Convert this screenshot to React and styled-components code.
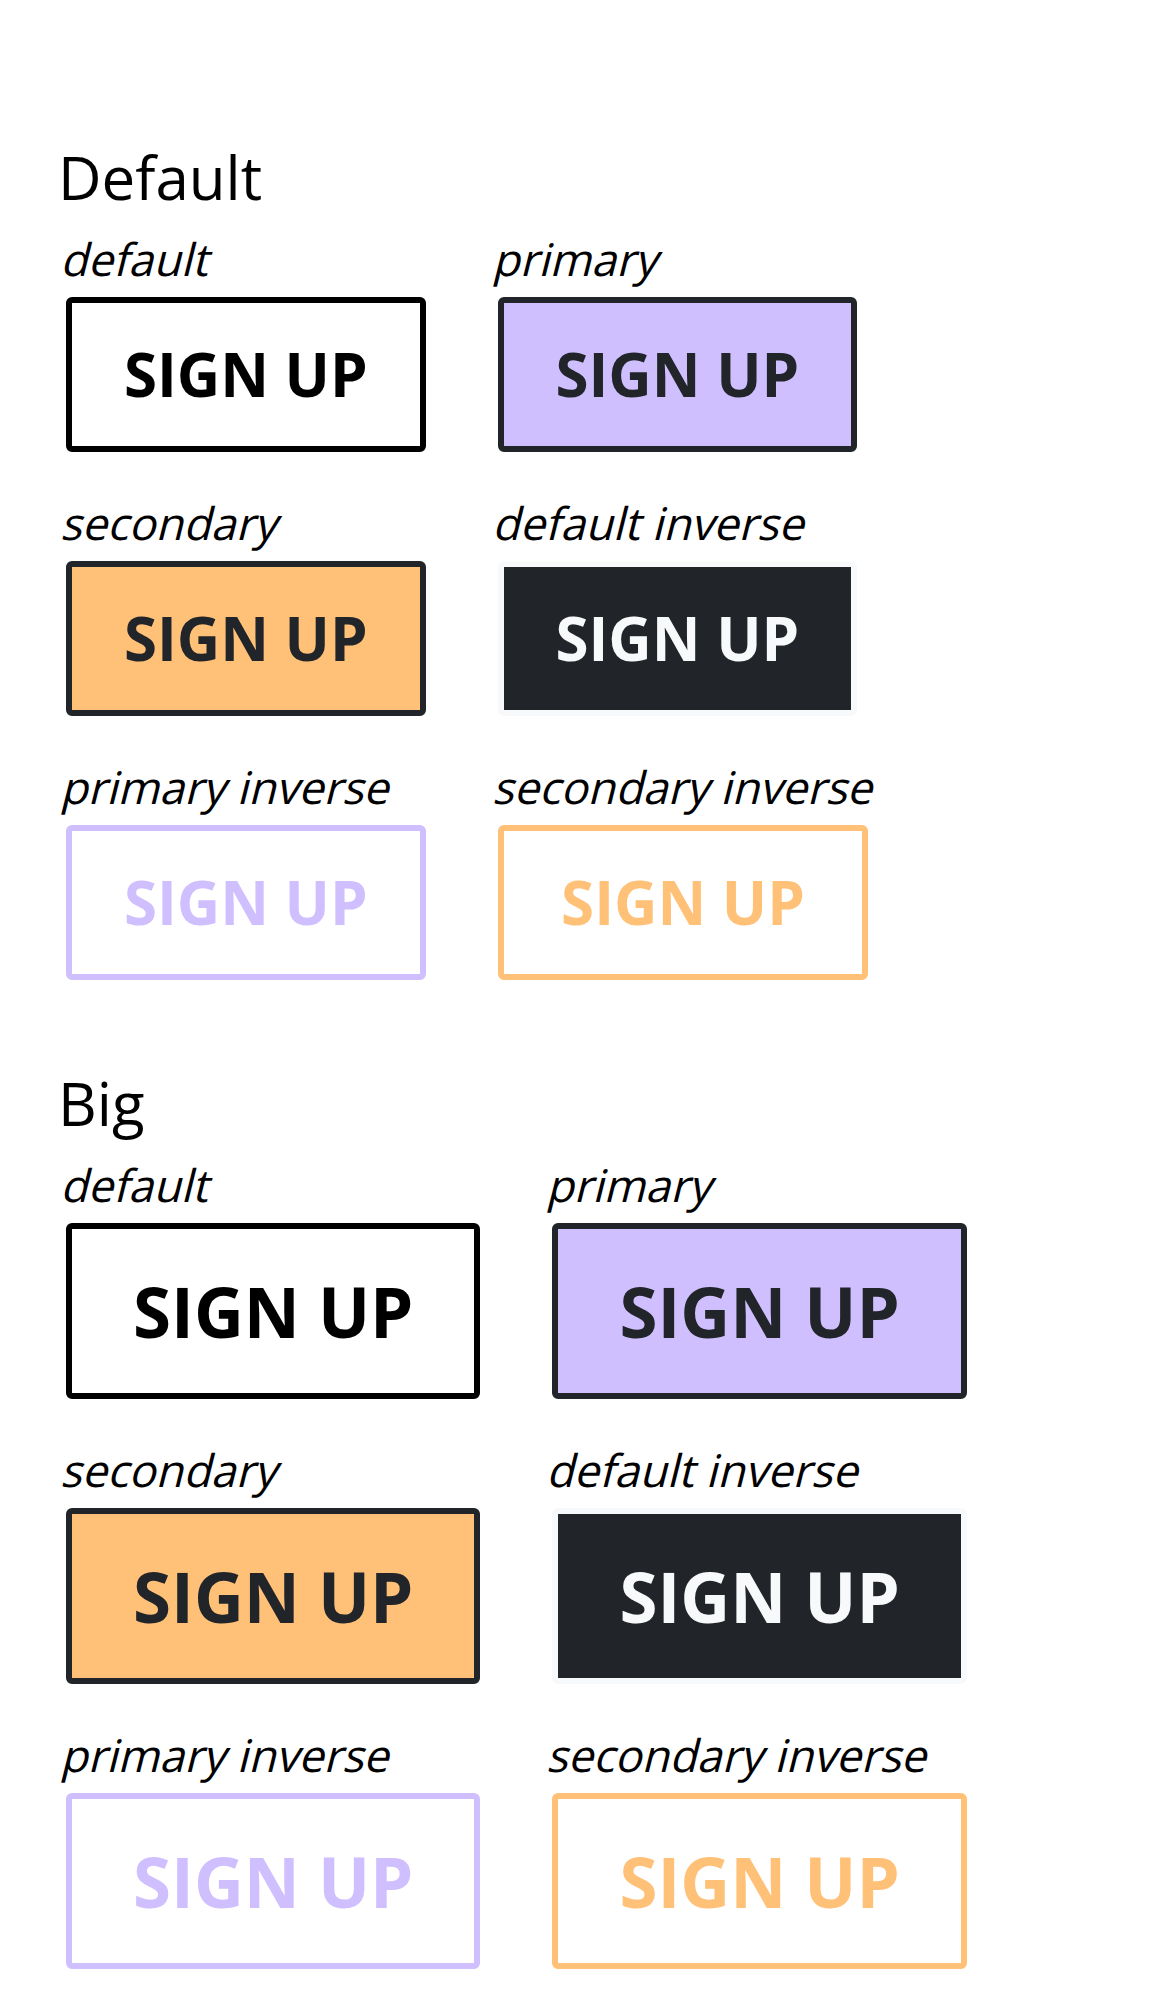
import React from "react";
import styled, { createGlobalStyle, css } from "styled-components";

const GlobalStyle = createGlobalStyle`
  html, body {
    margin: 0;
    padding: 0;
    background: #ffffff;
  }
  body {
    font-family: "Open Sans", "Noto Sans", sans-serif;
    color: #000000;
  }
`;

const Page = styled.main`
  padding: 136px 0 25px 58px;
  display: flex;
  flex-direction: column;
  gap: 82px;
`;

const Section = styled.section`
  display: flex;
  flex-direction: column;
`;

const Heading = styled.h2`
  margin: 0 0 10px 0;
  font-family: "Open Sans", sans-serif;
  font-weight: 400;
  font-size: 60px;
  line-height: normal;
  color: #000;
`;

const Grid = styled.div`
  display: grid;
  grid-template-columns: max-content max-content;
  column-gap: 72px;
  row-gap: 40px;
  justify-items: start;
  margin-left: 8px;
`;

const Item = styled.div`
  display: flex;
  flex-direction: column;
  align-items: stretch;
`;

/* The reference shows a synthesized oblique of the regular face */
const Label = styled.div`
  font-family: "Open Sans", sans-serif;
  font-style: normal;
  font-weight: 400;
  font-size: 45px;
  line-height: normal;
  color: #000;
  margin: 0 -3px 8px -6px;
  white-space: nowrap;
  transform: skewX(-14deg);
  transform-origin: 0 78.5%;
`;

const variants = {
  default: css`
    background: #ffffff;
    color: #000000;
    border-color: #000000;
  `,
  primary: css`
    background: #d0bfff;
    color: #212529;
    border-color: #212529;
  `,
  secondary: css`
    background: #ffc078;
    color: #212529;
    border-color: #212529;
  `,
  defaultInverse: css`
    background: #212529;
    color: #f8f9fa;
    border-color: #f8f9fa;
  `,
  primaryInverse: css`
    background: #ffffff;
    color: #d0bfff;
    border-color: #d0bfff;
  `,
  secondaryInverse: css`
    background: #ffffff;
    color: #ffc078;
    border-color: #ffc078;
  `,
};

const Button = styled.button`
  display: block;
  box-sizing: border-box;
  font-family: "Open Sans", sans-serif;
  font-weight: 700;
  font-size: ${(p) => (p.$big ? "69px" : "60px")};
  line-height: normal;
  padding: 0.508em ${(p) => (p.$big ? "0.885em" : "0.865em")};
  border: 6px solid;
  border-radius: 6px;
  text-align: center;
  white-space: nowrap;
  cursor: pointer;
  ${(p) => variants[p.$variant]}
`;

const items = [
  ["default", "default"],
  ["primary", "primary"],
  ["secondary", "secondary"],
  ["default inverse", "defaultInverse"],
  ["primary inverse", "primaryInverse"],
  ["secondary inverse", "secondaryInverse"],
];

function ButtonSet({ title, big }) {
  return (
    <Section>
      <Heading>{title}</Heading>
      <Grid>
        {items.map(([label, variant]) => (
          <Item key={variant}>
            <Label>{label}</Label>
            <Button $variant={variant} $big={big}>
              SIGN UP
            </Button>
          </Item>
        ))}
      </Grid>
    </Section>
  );
}

export default function App() {
  return (
    <>
      <GlobalStyle />
      <Page>
        <ButtonSet title="Default" />
        <ButtonSet title="Big" big />
      </Page>
    </>
  );
}
